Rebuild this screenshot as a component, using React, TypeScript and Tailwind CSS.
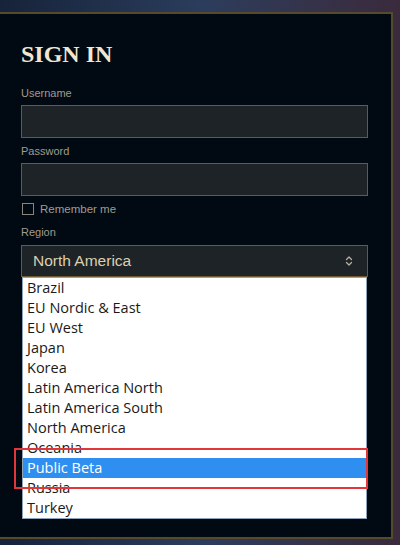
import { ChevronsUpDown } from 'lucide-react';

const regions = [
  'Brazil',
  'EU Nordic & East',
  'EU West',
  'Japan',
  'Korea',
  'Latin America North',
  'Latin America South',
  'North America',
  'Oceania',
  'Public Beta',
  'Russia',
  'Turkey',
];

function Field({ label }: { label: string }) {
  return (
    <div className="flex flex-col">
      <label className="text-[11px] leading-[14px] text-[#a09b8c] mb-[5px]">{label}</label>
      <div className="h-[33px] w-[347px] border border-[#6b5a32] bg-[#1e2328]" />
    </div>
  );
}

export default function App() {
  return (
    <div
      className="w-[400px] h-[545px] overflow-hidden relative bg-gradient-to-r from-[#16233a] via-[#2b3d5c] to-[#3a2a3c]"
      style={{ fontFamily: '"Liberation Sans", Arial, sans-serif' }}
    >
      {/* Panel */}
      <div className="absolute left-[-10px] top-[12px] w-[403px] h-[527px] bg-[#010a13] border-t-2 border-r-2 border-b-2 border-[#554b2c]">
        <div className="pl-[31px] pt-[26px] flex flex-col">
          <h1
            className="text-[24px] leading-[28px] font-bold text-[#f0e6d2]"
            style={{ fontFamily: '"Liberation Serif", "Times New Roman", serif' }}
          >
            SIGN IN
          </h1>

          <div className="mt-[18px] flex flex-col gap-[6px]">
            <Field label="Username" />
            <Field label="Password" />
          </div>

          <div className="mt-[7px] h-[12px] flex items-center gap-[6px]">
            <div className="ml-[1px] w-[12px] h-[12px] border border-[#8a8578] bg-transparent" />
            <span className="text-[11.5px] leading-[12px] text-[#a09b8c]">Remember me</span>
          </div>

          <label className="mt-[10px] text-[11px] leading-[14px] text-[#a09b8c] mb-[6px]">Region</label>

          <div className="relative w-[347px]">
            <div className="h-[32px] border border-[#6b5a32] bg-[#1e2328] flex items-center justify-between pl-[11px] pr-[12px]">
              <span className="text-[15.5px] text-[#dccfae]">North America</span>
              <ChevronsUpDown size={12} strokeWidth={2.5} className="text-[#b8b0a0]" />
            </div>

            {/* Native-style open dropdown */}
            <div
              className="absolute left-[1px] top-[32px] w-[345px] bg-white border border-[#8fa3b8]"
              style={{ fontFamily: '"Open Sans", "Noto Sans", sans-serif' }}
            >
              {regions.map((r) => (
                <div
                  key={r}
                  className={
                    r === 'Public Beta'
                      ? 'h-[20px] leading-[20px] pl-[4px] text-[14.5px] bg-[#2f8ff0] text-white'
                      : 'h-[20px] leading-[20px] pl-[4px] text-[14.5px] text-[#1a1a1a]'
                  }
                >
                  {r}
                </div>
              ))}
            </div>

            {/* Red highlight box */}
            <div className="absolute left-[-7px] top-[203px] w-[354px] h-[41px] border-2 border-[#e0383a]" />
          </div>
        </div>
      </div>
    </div>
  );
}
